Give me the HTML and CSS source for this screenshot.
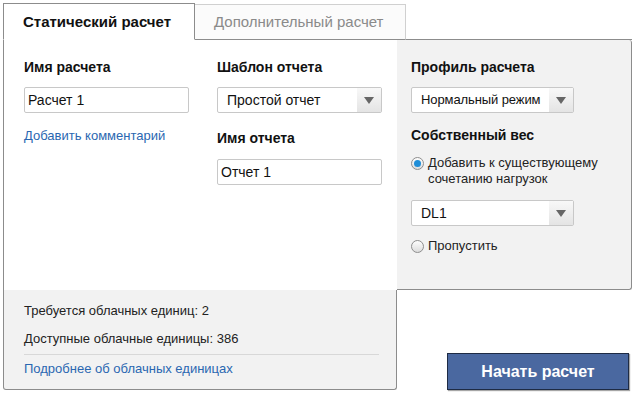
FILE: index.html
```html
<!DOCTYPE html>
<html lang="ru">
<head>
<meta charset="utf-8">
<link rel="stylesheet" href="styles.css">
</head>
<body>
<div class="wrap">
  <div class="tabs">
    <div class="tab active">Статический расчет</div>
    <div class="tab">Дополнительный расчет</div>
    <div class="tab-fill"></div>
  </div>
  <div class="grid">
    <div class="form">
      <div class="col">
        <div class="label">Имя расчета</div>
        <div class="input mt11">Расчет 1</div>
        <a class="link mt15">Добавить комментарий</a>
      </div>
      <div class="col">
        <div class="label">Шаблон отчета</div>
        <div class="select mt11"><span class="sel-text">Простой отчет</span><span class="arrow"></span></div>
        <div class="label mt16">Имя отчета</div>
        <div class="input mt12">Отчет 1</div>
      </div>
    </div>
    <div class="side">
      <div class="label">Профиль расчета</div>
      <div class="select mt11 side-sel"><span class="sel-text compact">Нормальный режим</span><span class="arrow"></span></div>
      <div class="label mt13">Собственный вес</div>
      <div class="radio-row mt11"><span class="radio checked"></span><span class="radio-label">Добавить к существующему сочетанию нагрузок</span></div>
      <div class="select mt13 side-sel"><span class="sel-text">DL1</span><span class="arrow"></span></div>
      <div class="radio-row mt12"><span class="radio"></span><span class="radio-label">Пропустить</span></div>
    </div>
    <div class="info">
      <div class="info-line">Требуется облачных единиц: 2</div>
      <div class="info-line mt12">Доступные облачные единицы: 386</div>
      <div class="sep"></div>
      <a class="link info-link">Подробнее об облачных единицах</a>
    </div>
    <div class="actions">
      <button class="start">Начать расчет</button>
    </div>
  </div>
</div>
</body>
</html>
```
FILE: styles.css
```css
* { box-sizing: border-box; }
html, body { margin: 0; padding: 0; background: #fff; }
body {
  font-family: "Liberation Sans", Arial, sans-serif;
  color: #111;
  width: 635px;
  height: 393px;
  overflow: hidden;
}
.wrap { padding: 3px 0 0 3px; width: 632px; }

.tabs { display: flex; align-items: flex-end; height: 37px; }
.tab {
  height: 36px;
  width: 211px;
  border-top: 1px solid #d0d0d0;
  border-right: 1px solid #d0d0d0;
  border-bottom: 1px solid #8c8c8c;
  background: #fbfbfb;
  color: #8a8a8a;
  font-size: 15px;
  line-height: 34px;
  padding-left: 19px;
  white-space: nowrap;
}
.tab.active {
  height: 37px;
  width: 192px;
  border: 1px solid #8c8c8c;
  border-bottom: 1px solid #fff;
  background: #fff;
  color: #111;
  font-weight: bold;
  padding-left: 19px;
  line-height: 35px;
}
.tab-fill { flex: 1; border-bottom: 1px solid #8c8c8c; }

.grid {
  display: grid;
  grid-template-columns: 394px 235px;
  grid-template-rows: 250px 100px;
}
.form {
  border-left: 1px solid #8c8c8c;
  padding: 18px 0 0 20px;
  display: flex;
  gap: 28px;
}
.col { width: 165px; display: flex; flex-direction: column; align-items: flex-start; }
.label { font-size: 14px; font-weight: bold; line-height: 18px; white-space: nowrap; }
.mt11 { margin-top: 11px; }
.mt12 { margin-top: 12px; }
.mt13 { margin-top: 13px; }
.mt15 { margin-top: 15px; }
.mt16 { margin-top: 16px; }

.input {
  width: 165px;
  height: 26px;
  border: 1px solid #c8c8c8;
  border-radius: 2px;
  background: #fff;
  font-size: 14px;
  line-height: 24px;
  padding-left: 3px;
}
.select {
  width: 165px;
  height: 26px;
  border: 1px solid #c8c8c8;
  border-radius: 2px;
  background: #fff;
  display: flex;
  font-size: 14px;
  line-height: 24px;
}
.side-sel { width: 163px; }
.sel-text { flex: 1; min-width: 0; padding-left: 9px; white-space: nowrap; overflow: hidden; }
.sel-text.compact { font-size: 13px; letter-spacing: -0.1px; }
.arrow {
  width: 24px;
  flex: none;
  background: linear-gradient(#f8f8f8, #e4e4e4);
  position: relative;
}
.arrow::after {
  content: "";
  position: absolute;
  left: 7px;
  top: 9px;
  border-left: 5px solid transparent;
  border-right: 5px solid transparent;
  border-top: 7px solid #666;
}
.link { font-size: 13px; line-height: 16px; color: #2a67b1; text-decoration: none; white-space: nowrap; }

.side {
  background: #f2f2f2;
  border-right: 1px solid #8c8c8c;
  border-bottom: 1px solid #8c8c8c;
  border-radius: 0 3px 3px 0;
  padding: 18px 0 0 14px;
  display: flex;
  flex-direction: column;
  align-items: flex-start;
}
.radio-row { display: flex; align-items: flex-start; font-size: 13px; line-height: 16px; color: #222; }
.radio {
  width: 13px;
  height: 13px;
  border: 1px solid #8e8e8e;
  border-radius: 50%;
  background: linear-gradient(#fdfdfd, #dcdcdc);
  margin-top: 2px;
  margin-right: 4px;
  flex: none;
  position: relative;
}
.radio.checked::after {
  content: "";
  position: absolute;
  left: 2px;
  top: 2px;
  width: 7px;
  height: 7px;
  border-radius: 50%;
  background: #1f8ed8;
}
.radio-label { width: 190px; }

.info {
  background: #f2f2f2;
  border: 1px solid #8c8c8c;
  border-top: none;
  border-radius: 0 0 3px 3px;
  padding: 13px 17px 0 20px;
  font-size: 13px;
  line-height: 16px;
  color: #222;
}
.sep { height: 1px; background: #d8d8d8; margin-top: 7px; }
.info-link { display: block; margin-top: 6px; }

.actions { display: flex; justify-content: flex-end; align-items: flex-end; padding-right: 3px; }
.start {
  width: 182px;
  height: 37px;
  background: #4a68a0;
  border: 1px solid #1e2b44;
  box-shadow: 1px 1px 1px rgba(0,0,0,0.35);
  color: #fff;
  font-family: "Liberation Sans", Arial, sans-serif;
  font-weight: bold;
  font-size: 16px;
  padding: 0;
}
```
